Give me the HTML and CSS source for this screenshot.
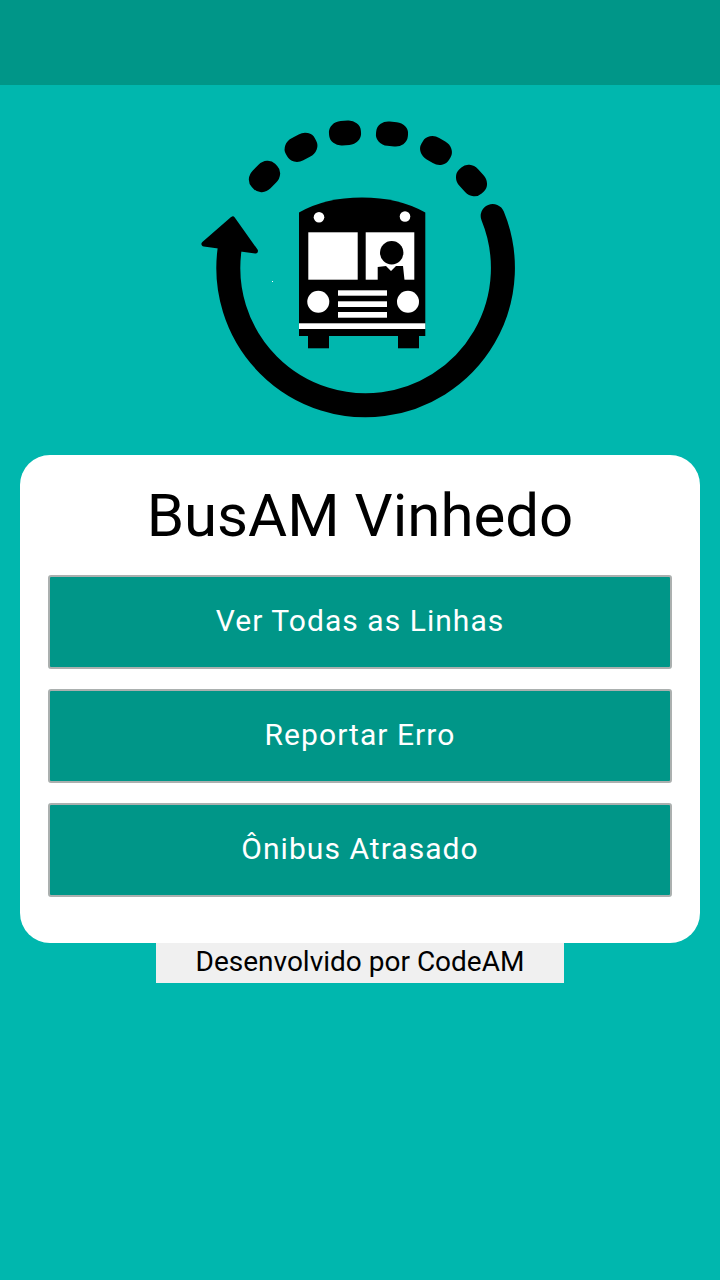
FILE: index.html
```html
<!DOCTYPE html>
<html>

<head>
    <meta charset="utf-8">
    <title>BusAM Vinhedo</title>

    <link rel="stylesheet" href="styles.css">
</head>

<body>

    <div class="top-bar"></div>

    <div class="logo-box">
        <svg class="logo" width="340" height="320" viewBox="190 110 340 320">
            <!-- dots -->
            <rect x="248" y="164" width="33" height="25" rx="12.5" ry="11" transform="rotate(-45 264.5 176.5)"></rect>
            <rect x="284.5" y="134.8" width="33" height="25" rx="12.5" ry="11" transform="rotate(-28 301 147.3)"></rect>
            <rect x="329" y="120.8" width="32" height="24.4" rx="12.5" ry="11" transform="rotate(-4 345 133)"></rect>
            <rect x="376" y="121.8" width="32" height="24.4" rx="12.5" ry="11" transform="rotate(6 392 134)"></rect>
            <rect x="420" y="138" width="32" height="25" rx="12.5" ry="11" transform="rotate(30 436 150.5)"></rect>
            <rect x="455" y="168" width="33" height="25" rx="12.5" ry="11" transform="rotate(47 471.5 180.5)"></rect>
            <!-- arrow -->
            <path class="arc" d="M492.7 216 A137.3 137.3 0 1 1 229.5 250"></path>
            <polygon class="arrow-head" points="232.7,219 204,244 255.5,251"></polygon>
            <!-- bus -->
            <path d="M299 212.5 Q325 197.5 362 197.5 Q399 197.5 425.3 212.5 V336 H299 Z"></path>
            <rect x="308" y="334" width="21" height="14.3"></rect>
            <rect x="398" y="334" width="21" height="14.3"></rect>
            <g class="white">
                <circle cx="319" cy="217.3" r="5.3"></circle>
                <circle cx="405" cy="216.5" r="5.3"></circle>
                <rect x="308.3" y="232.3" width="49.4" height="47.4"></rect>
                <rect x="365.7" y="232.3" width="48.6" height="47.4"></rect>
                <circle cx="318.3" cy="301.7" r="11"></circle>
                <circle cx="408" cy="301.7" r="11"></circle>
                <rect x="338" y="290.3" width="49" height="5.4"></rect>
                <rect x="338" y="301.3" width="49" height="5.7"></rect>
                <rect x="338" y="312" width="49" height="5.7"></rect>
                <rect x="299" y="323.3" width="126.3" height="5.7"></rect>
                <rect x="272" y="281" width="1" height="1"></rect>
            </g>
            <!-- driver -->
            <circle cx="391.7" cy="252.7" r="11.7"></circle>
            <path d="M377.7 267 L386 266 L391 271 L396 266 L403 266 L404.5 280 H377.7 Z"></path>
        </svg>
    </div>

    <div class="card">
        <h1 class="title">BusAM Vinhedo</h1>
        <button type="button" class="btn">Ver Todas as Linhas</button>
        <button type="button" class="btn">Reportar Erro</button>
        <button type="button" class="btn">Ônibus Atrasado</button>
    </div>

    <div class="footer-box">
        <p class="credit">Desenvolvido por CodeAM</p>
    </div>

</body>

</html>
```

FILE: styles.css
```css
body {
    margin: 0;
    min-height: 1280px;
    background-color: #00b7ae;
    font-family: Roboto, sans-serif;
}

.top-bar {
    height: 85px;
    background-color: #009688;
}

.logo-box {
    display: flex;
    justify-content: center;
    padding: 25px 0;
}

.logo {
    display: block;
}

.arc {
    fill: none;
    stroke: #000;
    stroke-width: 24;
    stroke-linecap: round;
}

.arrow-head {
    stroke: #000;
    stroke-width: 5;
    stroke-linejoin: round;
}

.white {
    fill: #fff;
}

.card {
    display: flex;
    flex-direction: column;
    gap: 20px;
    margin: 0 20px;
    padding: 0 28px 46px;
    background-color: #fff;
    border-radius: 30px;
}

.title {
    height: 100px;
    margin: 0;
    font-size: 60px;
    font-weight: 400;
    line-height: 122px;
    text-align: center;
    color: #000;
}

.btn {
    height: 94px;
    padding: 0 0 4px;
    font-family: Roboto, sans-serif;
    font-size: 30px;
    letter-spacing: 1.05px;
    color: #fff;
    background-color: #009688;
    border: 2px solid #abb0af;
    border-radius: 3px;
}

.footer-box {
    display: flex;
    justify-content: center;
}

.credit {
    width: 408px;
    height: 40px;
    margin: 0;
    font-size: 28px;
    line-height: 37px;
    text-align: center;
    color: #000;
    background-color: #f0f0f0;
}
```
